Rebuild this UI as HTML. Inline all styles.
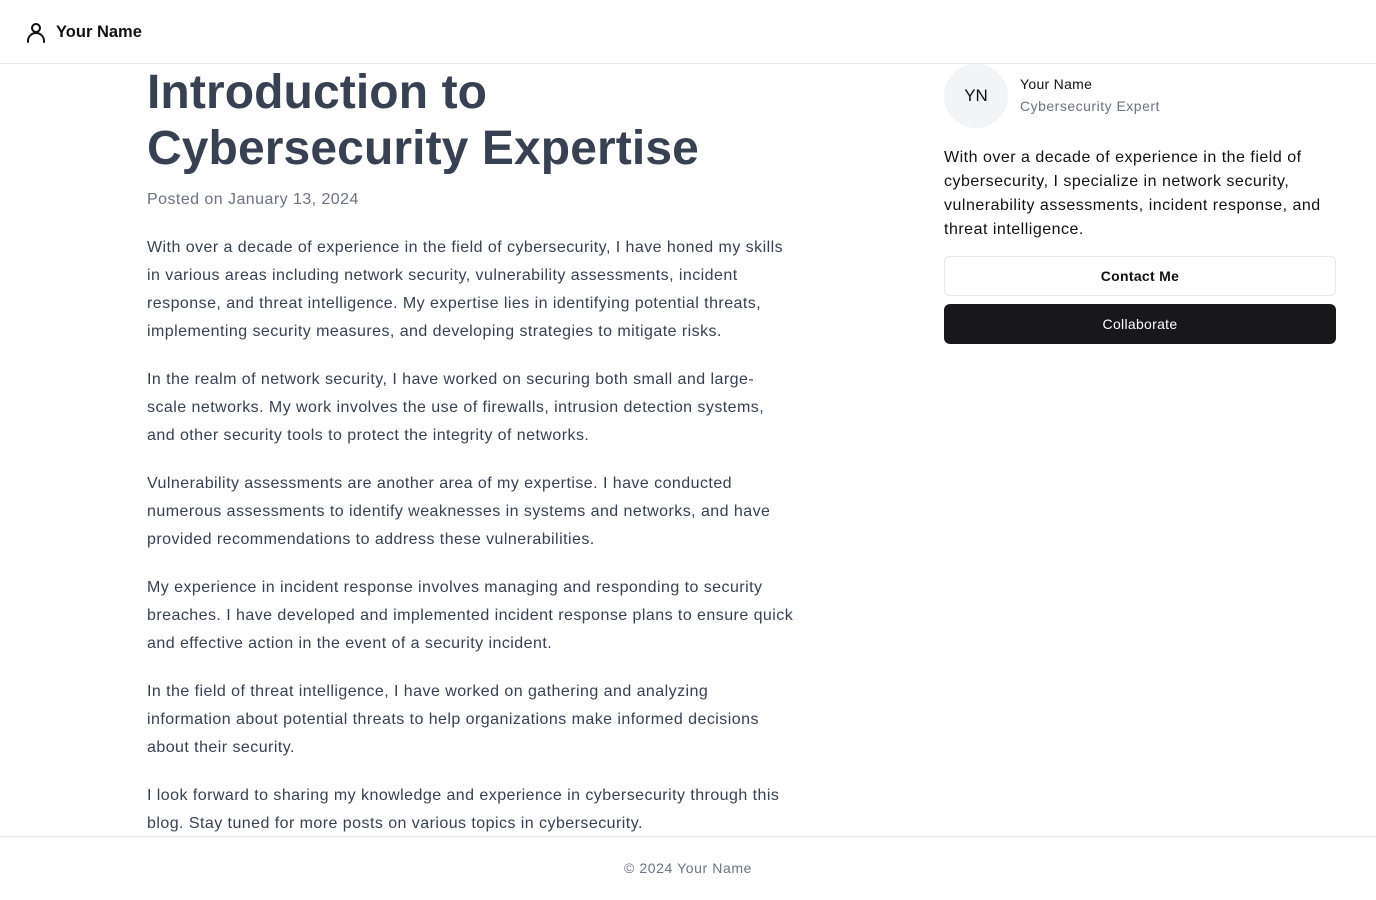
<!DOCTYPE html>
<html><head><meta charset="utf-8"><style>
*{margin:0;padding:0;box-sizing:border-box}
body{width:1376px;height:900px;background:#fff;font-family:"Liberation Sans",sans-serif;position:relative;overflow:hidden;color:#111}
.a{position:absolute;white-space:nowrap}
header{position:absolute;left:0;top:0;width:1376px;height:64px;border-bottom:1px solid #e5e7eb}
h1{position:absolute;left:147px;top:65px;font-size:48px;line-height:56px;font-weight:700;color:#374151;letter-spacing:0.1px;white-space:nowrap}
.p{position:absolute;left:147px;font-size:16px;line-height:28px;color:#374151;white-space:nowrap;letter-spacing:0.45px}
.btn{position:absolute;left:944px;width:392px;height:40px;border-radius:6px;font-size:14px;font-weight:700;display:flex;align-items:center;justify-content:center;letter-spacing:0.3px}
</style></head><body>
<header>
<svg class="a" style="left:24px;top:20px" width="24" height="24" viewBox="0 0 24 24" fill="none" stroke="#111" stroke-width="2" stroke-linecap="round"><circle cx="12" cy="8" r="4"/><path d="M4 22v-1a7 7 0 0 1 16 0v1"/></svg>
<div class="a" style="left:56px;top:22px;font-size:16.5px;font-weight:700;line-height:20px">Your Name</div>
</header>
<h1>Introduction to<br>Cybersecurity Expertise</h1>
<div class="a" style="left:147px;top:190px;font-size:16px;line-height:20px;color:#6b7280;letter-spacing:0.45px">Posted on January 13, 2024</div>
<div class="p" style="top:234px">With over a decade of experience in the field of cybersecurity, I have honed my skills<br>in various areas including network security, vulnerability assessments, incident<br>response, and threat intelligence. My expertise lies in identifying potential threats,<br>implementing security measures, and developing strategies to mitigate risks.</div>
<div class="p" style="top:366px">In the realm of network security, I have worked on securing both small and large-<br>scale networks. My work involves the use of firewalls, intrusion detection systems,<br>and other security tools to protect the integrity of networks.</div>
<div class="p" style="top:470px">Vulnerability assessments are another area of my expertise. I have conducted<br>numerous assessments to identify weaknesses in systems and networks, and have<br>provided recommendations to address these vulnerabilities.</div>
<div class="p" style="top:574px">My experience in incident response involves managing and responding to security<br>breaches. I have developed and implemented incident response plans to ensure quick<br>and effective action in the event of a security incident.</div>
<div class="p" style="top:678px">In the field of threat intelligence, I have worked on gathering and analyzing<br>information about potential threats to help organizations make informed decisions<br>about their security.</div>
<div class="p" style="top:782px">I look forward to sharing my knowledge and experience in cybersecurity through this<br>blog. Stay tuned for more posts on various topics in cybersecurity.</div>
<div class="a" style="left:944px;top:64px;width:64px;height:64px;border-radius:50%;background:#f3f4f6;display:flex;align-items:center;justify-content:center;font-size:17px;color:#111">YN</div>
<div class="a" style="left:1020px;top:75px;font-size:14px;line-height:18px;color:#111;letter-spacing:0.3px">Your Name</div>
<div class="a" style="left:1020px;top:97px;font-size:14px;line-height:18px;color:#6b7280;letter-spacing:0.5px">Cybersecurity Expert</div>
<div class="a" style="left:944px;top:146px;font-size:16px;line-height:24px;color:#111;letter-spacing:0.5px">With over a decade of experience in the field of<br>cybersecurity, I specialize in network security,<br>vulnerability assessments, incident response, and<br>threat intelligence.</div>
<div class="btn" style="top:256px;border:1px solid #e5e7eb;color:#111;background:#fff">Contact Me</div>
<div class="btn" style="top:304px;background:#18181b;color:#fff;font-weight:400">Collaborate</div>
<div class="a" style="left:0;top:836px;width:1376px;border-top:1px solid #e5e7eb;height:64px"></div>
<div class="a" style="left:0;top:859px;width:1376px;text-align:center;font-size:14px;line-height:18px;color:#6b7280;letter-spacing:0.6px">© 2024 Your Name</div>
</body></html>
